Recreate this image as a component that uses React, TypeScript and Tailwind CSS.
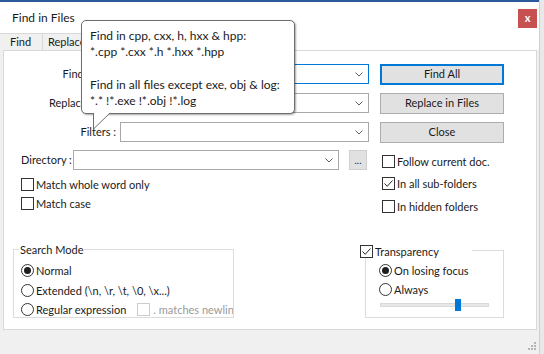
import React from "react";

const ui = "[font-family:'Segoe_UI',Lato,'Liberation_Sans',sans-serif]";

function Chevron() {
  return (
    <svg width="8" height="5" viewBox="0 0 8 5">
      <path d="M0.5 0.5 L4 4 L7.5 0.5" fill="none" stroke="#5f5f5f" strokeWidth="1" />
    </svg>
  );
}

function Combo({ className, focused }: { className: string; focused?: boolean }) {
  return (
    <div
      className={`${className} h-[20px] bg-white border flex items-center justify-end pr-[5px] ${
        focused ? "border-[#0078d7]" : "border-[#a8a8a8]"
      }`}
    >
      <Chevron />
    </div>
  );
}

function Check({ checked, disabled }: { checked?: boolean; disabled?: boolean }) {
  return (
    <span
      className={`w-[13px] h-[13px] shrink-0 border bg-white flex items-center justify-center ${
        disabled ? "border-[#cccccc]" : "border-[#333333]"
      }`}
    >
      {checked && (
        <svg width="11" height="11" viewBox="0 0 11 11">
          <path d="M1.5 5.5 L4.2 8.3 L9.5 2.5" fill="none" stroke="#222" strokeWidth="1" />
        </svg>
      )}
    </span>
  );
}

function Radio({ checked }: { checked?: boolean }) {
  return (
    <span className="w-[13px] h-[13px] shrink-0 rounded-full border border-[#333333] bg-white flex items-center justify-center">
      {checked && <span className="w-[7px] h-[7px] rounded-full bg-[#1e1e1e]" />}
    </span>
  );
}

function CheckRow({ label, checked, className }: { label: string; checked?: boolean; className?: string }) {
  return (
    <div className={`flex items-center gap-[2px] h-[13px] whitespace-nowrap ${className ?? ""}`}>
      <Check checked={checked} />
      <span className="leading-none">{label}</span>
    </div>
  );
}

function RadioRow({ label, checked, className }: { label: string; checked?: boolean; className?: string }) {
  return (
    <div className={`flex items-center gap-[2px] h-[13px] whitespace-nowrap ${className ?? ""}`}>
      <Radio checked={checked} />
      <span className="leading-none">{label}</span>
    </div>
  );
}

function Btn({ label, primary, className }: { label: string; primary?: boolean; className?: string }) {
  return (
    <div
      className={`h-[21px] w-full bg-[#e1e1e1] flex items-center justify-center ${
        primary ? "border-2 border-[#0078d7]" : "border border-[#adadad]"
      } ${className ?? ""}`}
    >
      {label}
    </div>
  );
}

export default function App() {
  return (
    <div className={`relative w-[544px] h-[354px] overflow-hidden bg-[#e9e9e9] text-[#1a1a1a] text-[11px] ${ui}`}>
      <div className="w-[540px] h-full flex flex-col bg-[#f0f0f0] border-r border-[#cfcfcf]">
        <div className="h-[2px] bg-[#2d5a9b]" />
        {/* title bar */}
        <div className="h-[31px] bg-white flex items-start justify-between pl-[12px] pr-[2px]">
          <span className="mt-[7px] text-[12px]">Find in Files</span>
          <div className="mt-[7px] w-[19px] h-[19px] bg-[#c75050] text-white font-bold text-[11px] flex items-center justify-center leading-none pb-[2px]">
            x
          </div>
        </div>
        {/* tabs */}
        <div className="h-[17px] bg-white flex items-end">
          <div className="h-[17px] w-[43px] bg-[#f0f0f0] border-r border-t border-[#d9d9d9] pl-[10px] flex items-center">
            Find
          </div>
          <div className="h-[17px] w-[58px] bg-[#f0f0f0] border-r border-t border-[#d9d9d9] pl-[5px] flex items-center">
            Replace
          </div>
          <div className="h-[19px] w-[70px] bg-white border-r border-t border-[#d9d9d9]" />
          <div className="h-[17px] w-[40px] bg-[#f0f0f0] border-r border-t border-[#d9d9d9]" />
        </div>
        {/* panel */}
        <div className="ml-[3px] w-[534px] h-[280px] bg-white border border-[#d9d9d9] flex flex-col">
          <div className="flex pl-[9px] pt-[13px]">
            <div className="w-[356px] flex flex-col">
              <div className="flex items-center h-[20px]">
                <span className="w-[104px] text-right pr-[1px] whitespace-nowrap">Find what :</span>
                <Combo className="ml-[3px] w-[249px]" focused />
              </div>
              <div className="flex items-center h-[20px] mt-[9px]">
                <span className="w-[104px] text-right pr-[1px] whitespace-nowrap">Replace with :</span>
                <Combo className="ml-[3px] w-[249px]" />
              </div>
              <div className="flex items-center h-[20px] mt-[9px]">
                <span className="w-[104px] text-right pr-[1px] whitespace-nowrap">Filters :</span>
                <Combo className="ml-[3px] w-[249px]" />
              </div>
              <div className="flex items-center h-[20px] mt-[8px] pl-[8px]">
                <span className="w-[52px] whitespace-nowrap">Directory :</span>
                <Combo className="w-[266px]" />
                <div className="ml-[10px] w-[18px] h-[20px] bg-[#e1e1e1] border border-[#d0d0d0] flex items-end justify-center pb-[4px] text-[10px] leading-none">
                  ...
                </div>
              </div>
              <CheckRow className="mt-[8px] pl-[8px]" label="Match whole word only" />
              <CheckRow className="mt-[6px] pl-[8px]" label="Match case" />
            </div>
            <div className="ml-[11px] w-[124px] flex flex-col">
              <Btn label="Find All" primary />
              <Btn label="Replace in Files" className="mt-[8px]" />
              <Btn label="Close" className="mt-[8px]" />
              <CheckRow className="mt-[12px] pl-[2px]" label="Follow current doc." />
              <CheckRow className="mt-[9px] pl-[2px]" label="In all sub-folders" checked />
              <CheckRow className="mt-[10px] pl-[2px]" label="In hidden folders" />
            </div>
          </div>

          <div className="mt-auto mb-[11px] flex pl-[9px]">
            <div className="relative w-[221px] h-[69px] border border-[#dcdcdc] pl-[7px] pt-[14px] flex flex-col">
              <span className="absolute left-[5px] top-[-8px] bg-white px-[1px] leading-[15px]">Search Mode</span>
              <RadioRow label="Normal" checked />
              <RadioRow className="mt-[7px]" label="Extended (\n, \r, \t, \0, \x...)" />
              <div className="mt-[6px] flex items-center h-[13px] whitespace-nowrap overflow-hidden">
                <Radio />
                <span className="ml-[2px] leading-none">Regular expression</span>
                <span className="ml-[11px]">
                  <Check disabled />
                </span>
                <span className="ml-[3px] leading-none text-[#9a9a9a]">. matches newline</span>
              </div>
            </div>
            <div className="relative ml-[131px] w-[139px] h-[68px] mt-[1px] border border-[#dcdcdc] pl-[13px] pt-[13px] flex flex-col">
              <div className="absolute left-[-6px] top-[-7px] w-[112px] h-[14px] bg-white flex items-center gap-[2px]">
                <Check checked />
                <span className="leading-none">Transparency</span>
              </div>
              <RadioRow label="On losing focus" checked />
              <RadioRow className="mt-[6px]" label="Always" />
              <div className="relative mt-[7px] ml-[1px] w-[109px] h-[4px] bg-[#e7e7e7] border border-[#dadada]">
                <span className="absolute left-[74px] top-[-5px] w-[6px] h-[12px] bg-[#0078d7]" />
              </div>
            </div>
          </div>
        </div>
        {/* bottom bar */}
        <div className="flex-1 flex items-end justify-end pr-[2px] pb-[3px]">
          <svg width="9" height="9" viewBox="0 0 9 9">
            <rect x="6" y="0" width="2" height="2" fill="#b5b5b5" />
            <rect x="3" y="3" width="2" height="2" fill="#b5b5b5" />
            <rect x="6" y="3" width="2" height="2" fill="#b5b5b5" />
            <rect x="0" y="6" width="2" height="2" fill="#b5b5b5" />
            <rect x="3" y="6" width="2" height="2" fill="#b5b5b5" />
            <rect x="6" y="6" width="2" height="2" fill="#b5b5b5" />
          </svg>
        </div>
      </div>

      {/* tooltip */}
      <div className="absolute left-[81px] top-[20px] w-[214px] h-[94px] bg-white border border-[#6e6e6e] rounded-[5px] shadow-[1px_1px_2px_rgba(0,0,0,0.35)] pl-[8px] pt-[7px] text-[12px] leading-[16.3px] whitespace-nowrap">
        <div>Find in cpp, cxx, h, hxx &amp; hpp:</div>
        <div>*.cpp *.cxx *.h *.hxx *.hpp</div>
        <div>&nbsp;</div>
        <div>Find in all files except exe, obj &amp; log:</div>
        <div>*.* !*.exe !*.obj !*.log</div>
      </div>
      <svg className="absolute left-[90px] top-[108px]" width="22" height="24" viewBox="0 0 22 24">
        <polygon points="4,2 4,20 19,6 20,2" fill="white" />
        <path d="M3.5 5 V21 L19.5 5.5" fill="none" stroke="#6e6e6e" strokeWidth="1" />
      </svg>
    </div>
  );
}
